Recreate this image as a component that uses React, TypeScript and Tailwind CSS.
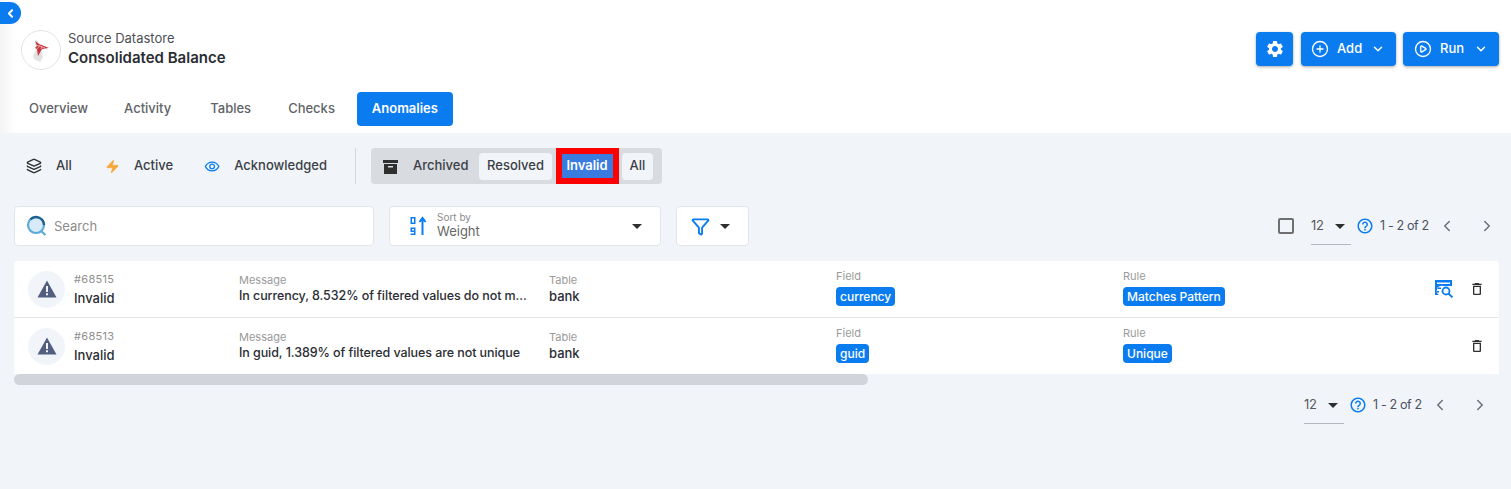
import { ChevronDown, ChevronLeft, ChevronRight, Filter, Layers, Zap, CirclePlus, CirclePlay } from "lucide-react";
import { MdOutlineDelete, MdOutlineHelpOutline, MdOutlineRemoveRedEye, MdSettings } from "react-icons/md";

const ROWS = [
  {
    id: "#68515",
    message: "In currency, 8.532% of filtered values do not m...",
    field: "currency",
    rule: "Matches Pattern",
    source: true,
  },
  {
    id: "#68513",
    message: "In guid, 1.389% of filtered values are not unique",
    field: "guid",
    rule: "Unique",
    source: false,
  },
];

function Caret() {
  return <span className="h-0 w-0 border-x-[5px] border-t-[5px] border-x-transparent border-t-[#2f2f2f]" />;
}

function Pager() {
  return (
    <div className="flex items-center text-[13px] text-[#4a5160]">
      <div className="flex h-[38px] w-[40px] items-center justify-between border-b border-[#b4b8bf] pt-[1px] pr-[6px]">
        <span className="tracking-[-0.4px] text-[#5a5a5a]">12</span>
        <Caret />
      </div>
      <MdOutlineHelpOutline size={18} className="ml-[5px] text-[#0b7cf0]" />
      <span className="ml-[6px] w-[48px] text-[12.5px] tracking-[-0.35px] whitespace-nowrap">1 - 2 of 2</span>
      <ChevronLeft size={18} className="ml-[10px] text-[#6b6f76]" />
      <ChevronRight size={18} className="ml-[22px] text-[#6b6f76]" />
    </div>
  );
}

function Status({ icon, label, className }: { icon: React.ReactNode; label: string; className: string }) {
  return (
    <div className={`flex items-center text-[13px] font-medium text-[#3b3f46] ${className}`}>
      {icon}
      <span>{label}</span>
    </div>
  );
}

function Cell({ label, className, children }: { label: string; className?: string; children: React.ReactNode }) {
  return (
    <div className={`flex min-w-0 flex-col ${className ?? ""}`}>
      <span className="text-[11px] leading-[14px] text-[#9a9a9a]">{label}</span>
      {children}
    </div>
  );
}

function Badge({ text }: { text: string }) {
  return (
    <span className="mt-[4px] w-fit rounded-[4px] bg-[#0b7cf0] px-[4px] text-[12px] leading-[19px] font-medium text-white">
      {text}
    </span>
  );
}

export default function App() {
  return (
    <div className="relative flex h-[489px] w-[1511px] flex-col overflow-hidden bg-[#f1f5fa] font-['Inter',sans-serif]">
      {/* collapse handle */}
      <button className="absolute top-[2px] left-0 flex h-[22px] w-[21px] items-center justify-center rounded-r-full bg-[#0b7cf0] text-white">
        <ChevronLeft size={13} strokeWidth={3.5} />
      </button>

      {/* Header */}
      <div className="h-[133px] shrink-0 bg-gradient-to-r from-[#f4f4f4] from-0% via-white via-[1%] to-white">
        <div className="flex h-[92px] items-start justify-between pt-[29px] pr-[12px] pl-[21px]">
          <div className="flex items-center gap-[7px]">
            <div className="flex h-[40px] w-[40px] items-center justify-center rounded-full border border-[#e4e4e4] bg-white">
              <svg width="18" height="24" viewBox="0 0 18 24">
                <path d="M3 2l3 1 3 8 2 8-3 5-6-3-1-3 3-6z" fill="#e2e2e2" />
                <path d="M3 3l4 3 10 4-7 1-4 7-1-7-2-1 2-2z" fill="#c9333a" />
                <path d="M4 7l9 3M5 11l4-5M9 11l1-3" stroke="#f3c4c6" strokeWidth="0.7" fill="none" />
              </svg>
            </div>
            <div className="mb-[3px] flex flex-col">
              <span className="text-[13px] leading-[18px] text-[#4c4f55]">Source Datastore</span>
              <span className="mt-[1px] text-[15px] leading-[20px] font-semibold text-[#2a2d33]">Consolidated Balance</span>
            </div>
          </div>
          <div className="mt-[3px] flex items-center text-[13px] font-medium text-white">
            <button className="flex h-[34px] w-[37px] items-center justify-center rounded-[4px] bg-[#0b7cf0] shadow-[0_1px_3px_rgba(0,0,0,0.35)]">
              <MdSettings size={20} />
            </button>
            <button className="ml-[8px] flex h-[34px] w-[95px] items-center rounded-[4px] bg-[#0b7cf0] pl-[10px] shadow-[0_1px_3px_rgba(0,0,0,0.35)]">
              <CirclePlus size={18} strokeWidth={1.75} />
              <span className="ml-[8px]">Add</span>
              <ChevronDown size={14} strokeWidth={2.5} className="ml-[9px]" />
            </button>
            <button className="ml-[7px] flex h-[34px] w-[96px] items-center rounded-[4px] bg-[#0b7cf0] pl-[11px] shadow-[0_1px_3px_rgba(0,0,0,0.35)]">
              <CirclePlay size={18} strokeWidth={1.75} />
              <span className="ml-[8px]">Run</span>
              <ChevronDown size={14} strokeWidth={2.5} className="ml-[10px]" />
            </button>
          </div>
        </div>
        <div className="flex h-[34px] items-center pl-[29px] text-[13px] font-medium text-[#5f6368]">
          <span>Overview</span>
          <span className="ml-[36px]">Activity</span>
          <span className="ml-[39px]">Tables</span>
          <span className="ml-[37px]">Checks</span>
          <span className="ml-[22px] flex h-[34px] w-[96px] items-center justify-center rounded-[4px] bg-[#0b7cf0] font-semibold text-white">
            Anomalies
          </span>
        </div>
      </div>

      {/* Status filters */}
      <div className="mt-[15px] flex h-[36px] items-center pl-[26px]">
        <Status label="All" className="w-[79px]" icon={<Layers size={16} className="mr-[14px] text-[#2f2f2f]" />} />
        <Status label="Active" className="w-[99px]" icon={<Zap size={15} fill="#f6a73a" strokeWidth={1} className="mr-[14px] text-[#f6a73a]" />} />
        <Status label="Acknowledged" className="w-[123px]" icon={<MdOutlineRemoveRedEye size={19} className="mr-[14px] text-[#0b7cf0]" />} />
        <div className="ml-[28px] h-[36px] w-px bg-[#d5d8dc]" />
        <div className="ml-[15px] flex h-[36px] w-[291px] items-center rounded-[4px] bg-[#d8dbe0] pl-[12px] text-[13px] font-medium text-[#3b3f46]">
          <svg width="15" height="15" viewBox="0 0 15 15" className="mr-[15px]">
            <path d="M0 1h15v3H0z" fill="#2f2f2f" />
            <path d="M1 5h13v10H1z" fill="#2f2f2f" />
            <path d="M5 7h5v1.5H5z" fill="#d8dbe0" />
          </svg>
          <span>Archived</span>
          <span className="ml-[10px] flex h-[27px] w-[73px] items-center justify-center rounded-[4px] bg-[#f1f5fa] pl-[1px]">Resolved</span>
          <span className="mb-[1px] ml-[4px] flex h-[36px] w-[63px] items-center justify-center border-[6px] border-[#ff0000] bg-[#3a7be0] font-semibold text-white">
            Invalid
          </span>
          <span className="ml-[3px] flex h-[27px] w-[31px] items-center justify-center rounded-[4px] bg-[#f1f5fa] pl-[1px]">All</span>
        </div>
      </div>

      {/* Toolbar */}
      <div className="mt-[22px] flex h-[40px] items-center pr-[15px] pl-[14px]">
        <div className="flex h-[40px] w-[360px] items-center rounded-[4px] border border-[#e2e5ea] bg-white pl-[11px] text-[13px] text-[#8c8c8c]">
          <svg width="22" height="22" viewBox="0 0 22 22" className="mr-[6px]">
            <circle cx="10" cy="10" r="8" fill="#d6eafa" stroke="#5ba8dc" strokeWidth="2.2" />
            <path d="M4.5 4.3A8 8 0 0 1 18 10" fill="none" stroke="#1f5f8f" strokeWidth="2.4" />
            <path d="M15 16l4.5 4" stroke="#5ba8dc" strokeWidth="2.2" />
          </svg>
          <span className="pt-[1px]">Search</span>
        </div>
        <div className="ml-[15px] flex h-[40px] w-[272px] items-center rounded-[4px] border border-[#e2e5ea] bg-white pr-[18px] pl-[19px]">
          <svg width="20" height="20" viewBox="0 0 20 20" className="mr-[8px] text-[#0b7cf0]">
            <path d="M1.5 1h5v7h-5zM3 2.5v4h2v-4zM1.5 11.5h5v7.5h-5v-1.5h3.5V16h-3.5zM3 13v1.5h2V13z" fill="currentColor" fillRule="evenodd" />
            <path d="M13.5 19V3M10.5 6l3-4 3 4" fill="none" stroke="currentColor" strokeWidth="2" />
          </svg>
          <div className="mb-[2px] flex flex-1 flex-col">
            <span className="text-[10px] leading-[11px] text-[#8c8c8c]">Sort by</span>
            <span className="text-[13px] leading-[16px] text-[#666]">Weight</span>
          </div>
          <Caret />
        </div>
        <div className="ml-[15px] flex h-[40px] w-[73px] items-center rounded-[4px] border border-[#e2e5ea] bg-white pl-[14px]">
          <Filter size={19} strokeWidth={2.4} className="text-[#0b7cf0]" />
          <span className="ml-[10px] flex"><Caret /></span>
        </div>
        <div className="ml-auto flex items-center">
          <span className="mr-[17px] h-[16px] w-[16px] rounded-[2px] border-2 border-[#6f6f6f]" />
          <Pager />
        </div>
      </div>

      {/* Anomaly rows */}
      <div className="mt-[15px] mr-[12px] ml-[14px] rounded-t-[4px] bg-white">
        {ROWS.map((row, i) => (
          <div
            key={row.id}
            className={`grid grid-cols-[225px_310px_287px_287px_1fr] items-center ${i === 0 ? "h-[57px] border-b border-[#e4e6e9]" : "h-[56px]"}`}
          >
            <div className="flex items-center pl-[14px]">
              <div className="flex h-[37px] w-[37px] items-center justify-center rounded-full bg-[#f1f5fa]">
                <svg width="20" height="18" viewBox="0 0 20 18">
                  <path d="M10 0.5 L19.5 17.5 H0.5 Z" fill="#525e80" />
                  <path d="M9 6h2v6h-2zM9 13.2h2v2h-2z" fill="#f1f5fa" />
                </svg>
              </div>
              <div className="ml-[9px] flex flex-col">
                <span className="text-[11px] leading-[14px] tracking-[0.3px] text-[#8f8f8f]">{row.id}</span>
                <span className="mt-[3px] text-[13px] leading-[18px] font-medium text-[#2a2d33]">Invalid</span>
              </div>
            </div>
            <Cell label="Message">
              <span className="text-[12.5px] leading-[18px] font-medium tracking-[-0.08px] whitespace-nowrap text-[#2a2d33]">{row.message}</span>
            </Cell>
            <Cell label="Table">
              <span className="text-[13px] leading-[18px] font-medium text-[#2a2d33]">bank</span>
            </Cell>
            <Cell label="Field" className="mb-[4px]">
              <Badge text={row.field} />
            </Cell>
            <div className="flex items-center justify-between pr-[14px]">
              <Cell label="Rule" className="mb-[4px]">
                <Badge text={row.rule} />
              </Cell>
              <div className="flex items-center gap-[15px] text-[#2f2f2f]">
                {row.source && (
                  <svg width="19" height="18" viewBox="0 0 19 18" className="text-[#0b7cf0]">
                    <path d="M0 0h17v6H8a5 5 0 0 0-4 9H0zM2 7.5V9h4V7.5zM2 11v1.5h2V11zM2 2.5V4h13V2.5z" fill="currentColor" fillRule="evenodd" />
                    <circle cx="11" cy="11" r="3.5" fill="none" stroke="currentColor" strokeWidth="1.8" />
                    <path d="M13.5 13.5l4 4" stroke="currentColor" strokeWidth="1.8" />
                  </svg>
                )}
                <MdOutlineDelete size={16} />
              </div>
            </div>
          </div>
        ))}
      </div>

      {/* Scrollbar */}
      <div className="ml-[14px] h-[11px] w-[854px] rounded-full bg-[#d1d5db]" />

      {/* Bottom pager */}
      <div className="mt-[1px] flex justify-end pr-[22px]">
        <Pager />
      </div>
    </div>
  );
}
